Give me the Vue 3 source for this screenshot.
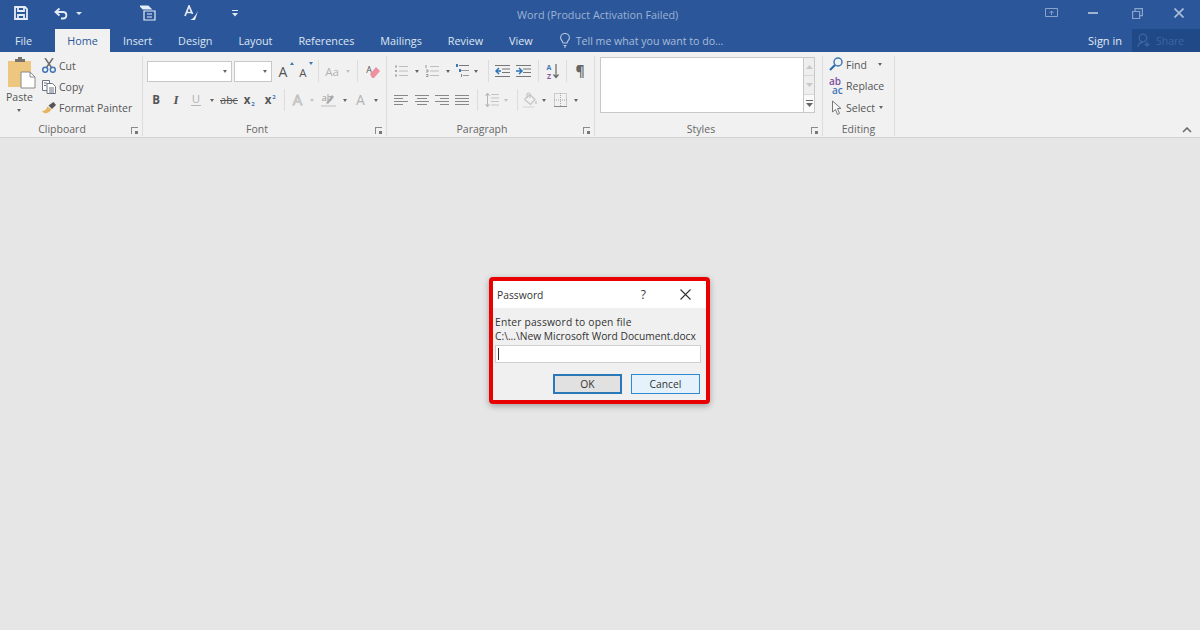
<script setup>
const tabs = ['Insert', 'Design', 'Layout', 'References', 'Mailings', 'Review', 'View']
</script>

<template>
  <div class="app">
    <header class="titlebar">
      <div class="qat">
        <svg class="q-save" width="14" height="14" viewBox="0 0 14 14" fill="none" stroke="#e6ecf5" stroke-width="1.800"><path d="M1 1h10l2 2v10H1z"/><path d="M4 1v4h6V1M4 13V9h6v4"/></svg>
        <svg class="q-undo" width="14" height="13" viewBox="0 0 14 13" fill="none" stroke="#e6ecf5" stroke-width="1.800"><path d="M5.500 1.500 1.500 5l4 3.500"/><path d="M2 5h7c4.500 0 4.500 6.500 0 6.500H7"/></svg>
        <span class="tcaret q-c1"></span>
        <svg class="q-new" width="16" height="16" viewBox="0 0 16 16" fill="none" stroke="#e6ecf5" stroke-width="1.200"><path d="M0 1h8l3 3H3z" fill="#e6ecf5"/><path d="M4 6h11v9H4z"/><path d="M7 9h5M7 12h5"/></svg>
        <svg class="q-spell" width="16" height="16" viewBox="0 0 16 16" fill="none" stroke="#e6ecf5" stroke-width="1.700"><path d="M1 11 5 1l3.500 8M2.500 7.500h5"/><path d="M6 15c3-1 5-4 8-9l-3 9z" fill="#e6ecf5" stroke="none"/></svg>
        <svg class="q-more" width="6" height="8" viewBox="0 0 6 8" fill="#dfe7f2"><path d="M0 1h6v1H0zM0 4h6L3 7.500z"/></svg>
      </div>
      <div class="doc-title">Word (Product Activation Failed)</div>
      <div class="winbtns">
        <svg width="13" height="10" viewBox="0 0 13 10" fill="none" stroke="#8aa3ca"><path d="M.5.500h12v8H.5z"/><path d="M6.500 7V3M4.500 5l2-2 2 2"/></svg>
        <svg width="10" height="3" viewBox="0 0 10 3" fill="#9fb4d4"><path d="M0 0h10v2H0z"/></svg>
        <svg class="wb-r" width="11" height="11" viewBox="0 0 11 11" fill="none" stroke="#8aa3ca" stroke-width="1.200"><path d="M.6 3.500h7v7h-7zM3 3.500V.6h7.400v7H7.600"/></svg>
        <svg class="wb-x" width="10" height="10" viewBox="0 0 10 10" fill="none" stroke="#a9bcd9" stroke-width="1.700"><path d="m.5.500 9 9M9.500.500l-9 9"/></svg>
      </div>
    </header>

    <nav class="tabbar">
      <span class="tab file">File</span>
      <span class="tab home">Home</span>
      <span v-for="t in tabs" :key="t" class="tab">{{ t }}</span>
      <svg class="bulb" width="10" height="15" viewBox="0 0 10 15" fill="none" stroke="#b9c9e0" stroke-width="1.100"><path d="M3 10C2.500 7.500.6 7 .6 4.800a4.400 4.300 0 0 1 8.800 0C9.400 7 7.500 7.500 7 10zM3.500 12.500h3M4 14h2"/></svg>
      <span class="tell">Tell me what you want to do...</span>
      <span class="signin">Sign in</span>
      <span class="share">
        <svg width="14" height="15" viewBox="0 0 14 15" fill="none" stroke="#3c679f" stroke-width="1.300"><circle cx="6" cy="5" r="3.800"/><path d="M1 14c0-3 2-4.500 5-4.500M10 9v5M7.500 11.500h5"/></svg>
        Share
      </span>
    </nav>

    <section class="ribbon">
      <div class="group g-clip">
        <div class="clip-body">
          <div class="paste">
            <svg width="30" height="32" viewBox="0 0 30 32">
              <path d="M1 4h23v26H1z" fill="#edc77f"/>
              <path d="M8 5V2h3V0h4v2h3v3z" fill="#77736c"/>
              <path d="M14 15h9l5 5v11H14z" fill="#fff" stroke="#8a8a8a"/>
              <path d="M23 15v5h5" fill="none" stroke="#8a8a8a"/>
            </svg>
            <span class="paste-label">Paste</span>
            <span class="caret"></span>
          </div>
          <div class="clip-list">
            <div class="clip-row">
              <svg width="14" height="15" viewBox="0 0 14 15" fill="none"><path d="M3 0l6.500 9.500M11 0 4.500 9.500" stroke="#6f6f6f" stroke-width="1.500"/><circle cx="3.200" cy="11.800" r="2.500" stroke="#3f78b5" stroke-width="1.500"/><circle cx="10.800" cy="11.800" r="2.500" stroke="#3f78b5" stroke-width="1.500"/></svg>
              <span>Cut</span>
            </div>
            <div class="clip-row">
              <svg width="14" height="14" viewBox="0 0 14 14" fill="#fff" stroke="#6b7580"><path d="M.5 .5h7v10h-7z"/><path d="M5 3.500h5.500l3 3v7H5z"/><path d="M2 3h3M2 5.500h2M7 8h5M7 10h5M7 12h5" fill="none"/></svg>
              <span>Copy</span>
            </div>
            <div class="clip-row">
              <svg width="14" height="12" viewBox="0 0 14 12"><path d="M0 9c3 0 4.500-2 5.500-4.500l4 3C7.500 10.500 4 12 2 11z" fill="#e4b45f"/><path d="m6.500 3.500 5-3.500 2.500 3-4 4z" fill="#555"/></svg>
              <span>Format Painter</span>
            </div>
          </div>
        </div>
        <div class="glabel">Clipboard</div>
        <span class="launch"></span>
      </div>

      <div class="group g-font">
        <div class="row r1">
          <span class="combo c-name"><span class="caret"></span></span>
          <span class="combo c-size"><span class="caret"></span></span>
          <svg class="m3" width="18" height="18" viewBox="0 0 18 18"><text x="7" y="15" class="big">A</text><path d="M14 3h4l-2-3z" fill="#3f78b5"/></svg>
          <svg class="m1" width="18" height="18" viewBox="0 0 18 18"><text x="7" y="15" class="mid">A</text><path d="M13 0h4l-2 3z" fill="#3f78b5"/></svg>
          <span class="sep s-a"></span>
          <svg class="mn1" width="20" height="18" viewBox="0 0 20 18"><text x="10" y="14" class="mid grey">Aa</text></svg>
          <span class="caret pale w12"></span>
          <span class="sep s-b"></span>
          <svg width="16" height="16" viewBox="0 0 16 16"><text x="5" y="10" class="tiny">A</text><path d="m6 11 6-7 4 4-6 7H8z" fill="#ee8fa2"/></svg>
        </div>
        <div class="row r2">
          <svg width="20" height="20" viewBox="0 0 20 20"><text x="10" y="14" class="mid bold">B</text></svg>
          <svg width="20" height="20" viewBox="0 0 20 20"><text x="10" y="14" class="mid italic">I</text></svg>
          <svg width="20" height="20" viewBox="0 0 20 20"><text x="10" y="13" class="mid grey">U</text><path d="M5 15.500h10" stroke="#b5b5b5"/></svg>
          <span class="caret w12"></span>
          <svg width="22" height="20" viewBox="0 0 22 20"><text x="11" y="14" class="small">abc</text><path d="M2 10.500h18" stroke="#555"/></svg>
          <svg width="20" height="20" viewBox="0 0 20 20"><text x="7" y="14" class="mid bold">x</text><text x="13" y="16" class="sub">2</text></svg>
          <svg width="21" height="20" viewBox="0 0 21 20"><text x="8" y="14" class="mid bold">x</text><text x="14" y="9" class="sub">2</text></svg>
          <span class="sep w7"></span>
          <svg width="19" height="20" viewBox="0 0 19 20"><text x="9.500" y="15" class="outline">A</text></svg>
          <span class="caret pale w10"></span>
          <svg width="22" height="20" viewBox="0 0 22 20"><text x="10" y="11" class="tiny2">ab</text><path d="m9 13 6-8 2 2-6 7z" fill="#aaa"/><path d="M4 16h15" stroke="#d8d8d8" stroke-width="2"/></svg>
          <span class="caret w12"></span>
          <svg width="19" height="20" viewBox="0 0 19 20"><text x="9.500" y="15" class="big grey">A</text></svg>
          <span class="caret w12"></span>
        </div>
        <div class="glabel">Font</div>
        <span class="launch"></span>
      </div>

      <div class="group g-para">
        <div class="row r1">
          <svg width="14" height="14" viewBox="0 0 14 14" stroke="#bdbdbd" fill="none"><path d="M5 2.500h9M5 7h9M5 11.500h9"/><path d="M1 2.500h2M1 7h2M1 11.500h2" stroke="#aaa" stroke-width="2"/></svg>
          <span class="caret w17"></span>
          <svg width="14" height="14" viewBox="0 0 14 14" stroke="#bdbdbd" fill="none"><path d="M5 2.500h9M5 7h9M5 11.500h9"/><path d="M1 1v3M1 6h2v2H1M1 10.500h2v2H1" stroke="#999"/></svg>
          <span class="caret w17"></span>
          <svg width="14" height="14" viewBox="0 0 14 14" fill="none"><path d="M3 1.500h10" stroke="#777"/><path d="M5 6.500h8" stroke="#999"/><path d="M7 11.500h6" stroke="#999"/><path d="M0 0h2v3H0z" fill="#3f78b5"/><path d="M3 5h2v3H3z" fill="#3f78b5"/><path d="M5 10h1v3H5z" fill="#888"/></svg>
          <span class="caret w11"></span>
          <span class="sep w14"></span>
          <svg width="15" height="14" viewBox="0 0 15 14" fill="none" stroke="#777"><path d="M0 1.500h15M7 5h8M7 8.500h8M0 12.500h15"/><path d="M6 7H1M4 4 1 7l3 3" stroke="#2d73b8" stroke-width="1.500"/></svg>
          <svg class="m6" width="15" height="14" viewBox="0 0 15 14" fill="none" stroke="#777"><path d="M0 1.500h15M7 5h8M7 8.500h8M0 12.500h15"/><path d="M0 7h5M3 4l3 3-3 3" stroke="#2d73b8" stroke-width="1.500"/></svg>
          <span class="sep w14"></span>
          <svg width="14" height="18" viewBox="0 0 14 18"><text x="4" y="8" class="az a">A</text><text x="4" y="17" class="az z">Z</text><path d="M11 2v13M8.500 12.500l2.500 3 2.500-3" fill="none" stroke="#666" stroke-width="1.200"/></svg>
          <span class="sep w14"></span>
          <span class="pil">¶</span>
        </div>
        <div class="row r2">
          <svg width="14" height="12" viewBox="0 0 14 12" stroke="#888"><path d="M0 1.500h14M0 4.500h9M0 7.500h14M0 10.500h9"/></svg>
          <svg class="m7" width="14" height="12" viewBox="0 0 14 12" stroke="#888"><path d="M0 1.500h14M2 4.500h10M0 7.500h14M2 10.500h10"/></svg>
          <svg class="m6" width="14" height="12" viewBox="0 0 14 12" stroke="#888"><path d="M0 1.500h14M5 4.500h9M0 7.500h14M5 10.500h9"/></svg>
          <svg class="m6" width="14" height="12" viewBox="0 0 14 12" stroke="#888"><path d="M0 1.500h14M0 4.500h14M0 7.500h14M0 10.500h14"/></svg>
          <span class="sep w16"></span>
          <svg width="14" height="16" viewBox="0 0 14 16" fill="none" stroke="#c4c4c4"><path d="M6 2.500h8M6 6h8M6 9.500h8M6 13h8"/><path d="M2.500 2v12M.5 4l2-3 2 3M.5 12l2 3 2-3" stroke="#b5b5b5"/></svg>
          <span class="caret pale w14"></span>
          <span class="sep w9"></span>
          <svg width="16" height="16" viewBox="0 0 16 16" fill="none" stroke="#c4c4c4" stroke-width="1.200"><path d="M3 7 8 2.500l5 5-4.500 5L3 8z"/><path d="M5 6V2.500a1.500 1.500 0 0 1 3 0V6"/><path d="M14 9v3" stroke="#d2d2d2" stroke-width="2"/><path d="M1 15h11" stroke="#e2e2e2" stroke-width="2"/></svg>
          <span class="caret w12"></span>
          <svg class="m3b" width="13" height="14" viewBox="0 0 13 14" fill="none" stroke="#a9a9a9" stroke-dasharray="1 1"><path d="M.5.500h12v13H.5zM6.500 0v14M0 7h13"/><path d="M0 13.500h13" stroke="#888" stroke-dasharray="none"/></svg>
          <span class="caret w18"></span>
        </div>
        <div class="glabel">Paragraph</div>
        <span class="launch"></span>
      </div>

      <div class="group g-styles">
        <div class="styles-body">
          <div class="gallery"></div>
          <div class="scroller">
            <span class="sbtn"><svg width="7" height="4" viewBox="0 0 7 4" fill="#c8c8c8"><path d="M3.500 0 7 4H0z"/></svg></span>
            <span class="sbtn"><svg width="7" height="4" viewBox="0 0 7 4" fill="#c8c8c8"><path d="M0 0h7L3.500 4z"/></svg></span>
            <span class="sbtn on"><svg width="7" height="7" viewBox="0 0 7 7" fill="#666"><path d="M0 0h7v1H0zM0 3h7L3.500 7z"/></svg></span>
          </div>
        </div>
        <div class="glabel">Styles</div>
        <span class="launch"></span>
      </div>

      <div class="group g-edit">
        <div class="edit-list">
          <div class="edit-row">
            <svg width="14" height="15" viewBox="0 0 14 15" fill="none"><circle cx="9" cy="5" r="4" stroke="#3f78b5" stroke-width="1.500"/><path d="M6 8 1 13" stroke="#2d6aa8" stroke-width="2.200"/></svg>
            <span>Find</span><span class="caret w20"></span>
          </div>
          <div class="edit-row">
            <span class="abac"><i class="ab">ab</i><i class="ac">ac</i></span>
            <span>Replace</span>
          </div>
          <div class="edit-row">
            <svg width="14" height="16" viewBox="0 0 14 16" fill="#f7f7f7" stroke="#777"><path d="M3.500 1v11l3-2.500 2 5 2-1-2-5h3.500z"/></svg>
            <span>Select</span><span class="caret w6"></span>
          </div>
        </div>
        <div class="glabel">Editing</div>
      </div>

      <svg class="collapse" width="10" height="6" viewBox="0 0 10 6" fill="none" stroke="#666" stroke-width="1.500"><path d="m1 5 4-4 4 4"/></svg>
    </section>

    <main class="canvas"></main>

    <div class="dialog">
      <div class="dlg-head">
        <span class="dlg-title">Password</span>
        <span class="dlg-help">?</span>
        <svg width="11" height="11" viewBox="0 0 11 11" fill="none" stroke="#333" stroke-width="1.100"><path d="m.5.500 10 10M10.500.500l-10 10"/></svg>
      </div>
      <div class="dlg-body">
        <p class="dlg-text first">Enter password to open file</p>
        <p class="dlg-text">C:\...\New Microsoft Word Document.docx</p>
        <div class="dlg-input"><span class="cursor"></span></div>
        <div class="dlg-actions">
          <span class="btn ok">OK</span>
          <span class="btn cancel">Cancel</span>
        </div>
      </div>
    </div>
  </div>
</template>

<style>
html, body { margin: 0; background: #e6e6e6; }
</style>

<style scoped>
.app {
  position: relative;
  width: 1200px;
  height: 630px;
  overflow: hidden;
  display: flex;
  flex-direction: column;
  background: #e6e6e6;
  font-family: "Open Sans", "Noto Sans", sans-serif;
  font-size: 10.5px;
  color: #555;
}
svg { flex: none; display: block; }
text { font-family: "Open Sans", sans-serif; fill: #555; text-anchor: middle; }

/* title bar */
.titlebar { height: 29px; background: #2b579a; display: flex; align-items: center; position: relative; flex: none; }
.qat { display: flex; align-items: center; padding-bottom: 3px; }
.q-save { margin-left: 14px; }
.q-undo { margin-left: 26px; }
.tcaret { width: 0; height: 0; border: 3px solid transparent; border-top: 3px solid #dfe7f2; border-bottom: 0; margin-left: 8px; }
.q-new { margin-left: 58px; }
.q-spell { margin-left: 28px; }
.q-more { margin-left: 32px; }
.doc-title { position: absolute; left: 517px; width: 160px; text-align: center; color: #9db2d3; font-size: 10.800px; white-space: nowrap; }
.winbtns { margin-left: auto; margin-right: 16px; padding-bottom: 3px; display: flex; align-items: center; gap: 30px; }
.wb-r { margin-left: 4px; }
.wb-x { margin-left: 1px; }

/* tabs */
.tabbar { height: 23px; background: #2b579a; display: flex; align-items: stretch; flex: none; }
.tab { padding: 0 13px; line-height: 24px; color: #dfe6f1; white-space: nowrap; font-size: 10.800px; }
.tab.file { padding: 0; width: 47px; text-align: center; margin-right: 8px; }
.tab.home { background: #f1f1f1; color: #2b579a; width: 55px; padding: 0; text-align: center; }
.bulb { margin: 4px 0 0 14px; }
.tell { margin-left: 6px; line-height: 24px; color: #a9bcd9; white-space: nowrap; font-size: 10.600px; }
.signin { margin-left: auto; line-height: 24px; color: #e4eaf4; font-size: 11px; }
.share { margin-left: 10px; width: 68px; box-sizing: border-box; background: #1f4a87; color: #3c679f; display: flex; align-items: center; gap: 5px; padding-left: 5px; }

/* ribbon */
.ribbon { height: 85px; flex: none; background: #f1f1f1; border-bottom: 1px solid #d2d2d2; display: flex; position: relative; }
.group { position: relative; margin-top: 4px; height: 80px; box-sizing: border-box; border-right: 1px solid #dcdcdc; display: flex; flex-direction: column; padding-top: 4px; }
.g-clip { width: 143px; }
.g-font { width: 244px; padding-left: 3px; }
.g-para { width: 208px; padding-left: 7px; }
.g-styles { width: 228px; padding-left: 5px; padding-top: 1px; }
.g-edit { width: 72px; padding-top: 0; }
.glabel { margin-top: auto; height: 14px; line-height: 14px; padding-right: 18px; text-align: center; font-size: 10.500px; color: #666; }
.g-para .glabel { padding-right: 24px; }
.g-styles .glabel { padding-right: 20px; }
.g-edit .glabel { padding-right: 0; }
.launch { position: absolute; right: 4px; bottom: 2px; width: 6px; height: 6px; border-left: 1px solid #8a8a8a; border-top: 1px solid #8a8a8a; }
.launch::after { content: ""; position: absolute; right: 0; bottom: 0; width: 3px; height: 3px; background: #777; }

.row { display: flex; align-items: center; height: 22px; }
.r2 { margin-top: 7px; }

.caret { display: flex; justify-content: center; align-items: center; flex: none; }
.caret::before { content: ""; border: 2.500px solid transparent; border-top: 3px solid #666; border-bottom: 0; }
.caret.pale::before { border-top-color: #c2c2c2; }
.w6 { width: 6px; } .w7 { width: 7px; } .w9 { width: 9px; } .w10 { width: 10px; } .w11 { width: 11px; } .w12 { width: 12px; }
.w14 { width: 14px; } .w16 { width: 16px; } .w17 { width: 17px; } .w18 { width: 18px; } .w20 { width: 20px; }
.mn1 { margin-left: -1px; } .m1 { margin-left: 2px; } .m3 { margin-left: 4px; } .m3b { margin-left: 4px; } .m6 { margin-left: 6px; } .m7 { margin-left: 7px; }

.sep { display: flex; justify-content: center; align-self: stretch; flex: none; }
.sep::before { content: ""; width: 1px; background: #dcdcdc; }
.s-a { width: 9px; } .s-b { width: 7px; margin-right: 3px; }

.combo { height: 21px; box-sizing: border-box; background: #fff; border: 1px solid #c8c8c8; display: flex; justify-content: flex-end; align-items: center; padding-right: 3px; }
.combo .caret { width: 7px; }
.c-name { width: 85px; margin-left: 1px; }
.c-size { width: 38px; margin-left: 2px; }

.big { font-size: 14px; } .mid { font-size: 11.500px; } .tiny { font-size: 9px; } .tiny2 { font-size: 9px; fill: #999; }
.small { font-size: 10.500px; } .sub { font-size: 6px; fill: #3f78b5; font-weight: 700; }
.bold { font-weight: 700; } .italic { font-style: italic; font-family: "Liberation Serif", serif; font-weight: 700; font-size: 13px; }
text.grey { fill: #b2b2b2; }
.outline { font-size: 15px; fill: #eee; stroke: #bcbcbc; stroke-width: .8px; }
.az { font-size: 7px; font-weight: 700; }
.a { fill: #3f78b5; } .z { fill: #8e5aa8; }
.pil { width: 14px; font-size: 14px; font-weight: 700; color: #666; text-align: center; line-height: 22px; }

/* clipboard */
.clip-body { display: flex; height: 62px; margin-top: -3px; }
.paste { margin-left: 7px; width: 31px; margin-right: 4px; display: flex; flex-direction: column; align-items: flex-start; }
.paste-label { margin-left: -1px; line-height: 16px; width: 26px; text-align: center; }
.paste .caret { width: 24px; height: 10px; }
.clip-list { display: flex; flex-direction: column; margin-top: -2px; }
.clip-row { height: 21.500px; display: flex; align-items: center; gap: 3px; white-space: nowrap; }

/* styles */
.styles-body { display: flex; }
.gallery { width: 203px; height: 56px; background: #fff; box-sizing: border-box; border: 1px solid #c8c8c8; border-right: 0; }
.scroller { width: 12px; display: flex; flex-direction: column; height: 56px; box-sizing: border-box; border: 1px solid #c8c8c8; background: #eee; }
.sbtn { flex: 1; display: flex; align-items: center; justify-content: center; border-bottom: 1px solid #d8d8d8; }
.sbtn.on { border-bottom: 0; background: #fafafa; }

/* editing */
.edit-list { display: flex; flex-direction: column; padding-left: 6px; margin-top: -2px; }
.edit-row { height: 21.500px; display: flex; align-items: center; gap: 3px; white-space: nowrap; }
.abac { width: 14px; height: 18px; display: block; line-height: 8.500px; }
.abac i { font-style: normal; display: block; font-size: 10px; font-weight: 600; }
.ab { color: #7c4fa0; }
.ac { color: #3f78b5; margin-left: 3px; }
.collapse { position: absolute; right: 8px; bottom: 4px; }

.canvas { flex: 1; }

/* dialog */
.dialog { position: absolute; left: 489px; top: 277px; width: 221px; height: 127px; box-sizing: border-box; border: 4px solid #e90000; border-radius: 4px; background: #f0f0f0; box-shadow: 0 2px 6px rgba(0,0,0,.3); display: flex; flex-direction: column; color: #333; }
.dlg-head { height: 27px; background: #fff; display: flex; align-items: center; padding: 0 15px 0 4px; flex: none; }
.dlg-title { font-size: 10.300px; color: #333; }
.dlg-help { margin-left: auto; margin-right: 34px; font-size: 12px; color: #333; }
.dlg-body { padding: 7px 4px 0 2px; display: flex; flex-direction: column; }
.dlg-text { margin: 0; height: 14px; line-height: 14px; font-size: 10.250px; white-space: nowrap; }
.dlg-text.first { letter-spacing: .2px; }
.dlg-input { margin-top: 2px; width: 206px; height: 18px; box-sizing: border-box; background: #fff; border: 1px solid #d0d0d0; padding: 2px; }
.cursor { display: block; width: 1px; height: 12px; background: #333; }
.dlg-actions { display: flex; gap: 9px; margin-top: 11px; padding-left: 58px; }
.btn { width: 69px; height: 20px; box-sizing: border-box; display: flex; justify-content: center; align-items: center; font-size: 10.300px; color: #333; }
.ok { background: #e1e1e1; border: 2px solid #2a78b8; }
.cancel { background: #e5f1fb; border: 1px solid #2f8ad0; }
</style>
